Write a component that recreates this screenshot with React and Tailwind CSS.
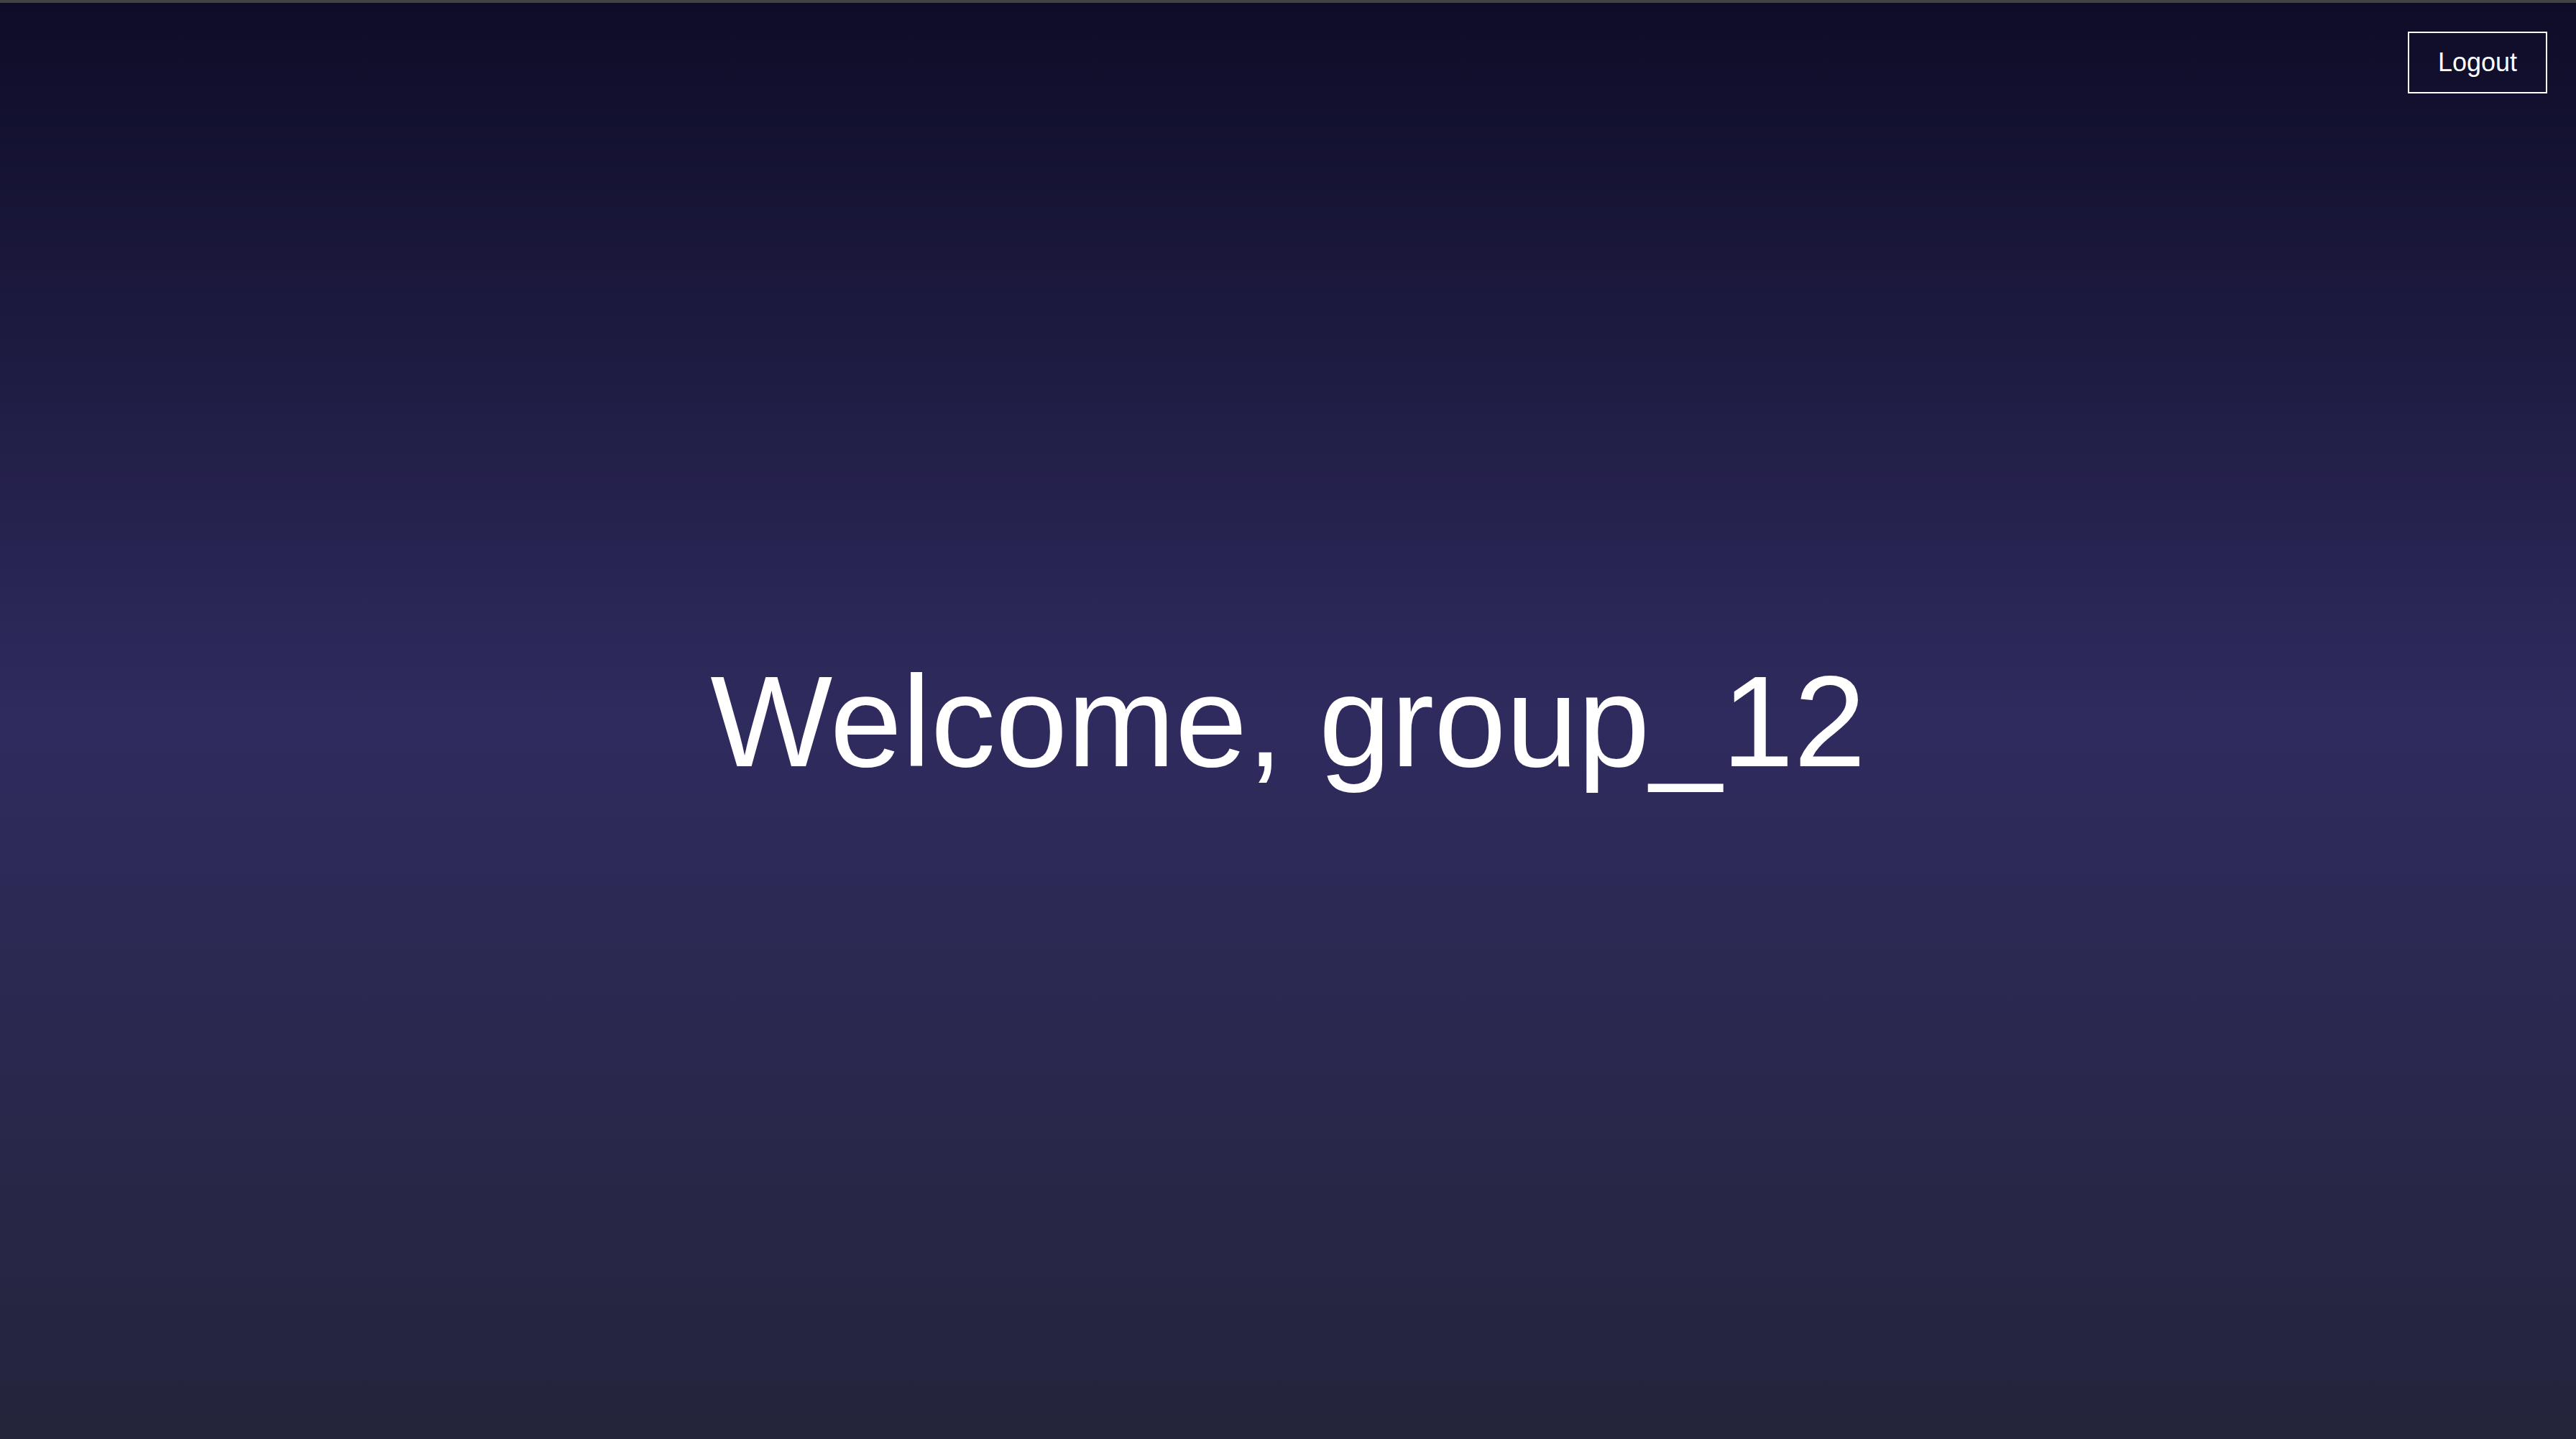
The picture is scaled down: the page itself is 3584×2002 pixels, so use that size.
export default function App() {
  return (
    <div className="flex min-h-screen flex-col border-t-4 border-[#434343] bg-linear-to-b/srgb from-[#0e0c27] via-[#2f2b5e] to-[#24243b] font-['Liberation_Sans',Arial,sans-serif] text-white">
      <header className="flex justify-end px-10 pt-10">
        <button type="button" className="border-2 border-white px-10 py-[21px] text-4xl">
          Logout
        </button>
      </header>
      <main className="flex flex-1 items-center justify-center pb-[124px]">
        <h1 className="text-[180px] leading-none">Welcome, group_12</h1>
      </main>
    </div>
  );
}
